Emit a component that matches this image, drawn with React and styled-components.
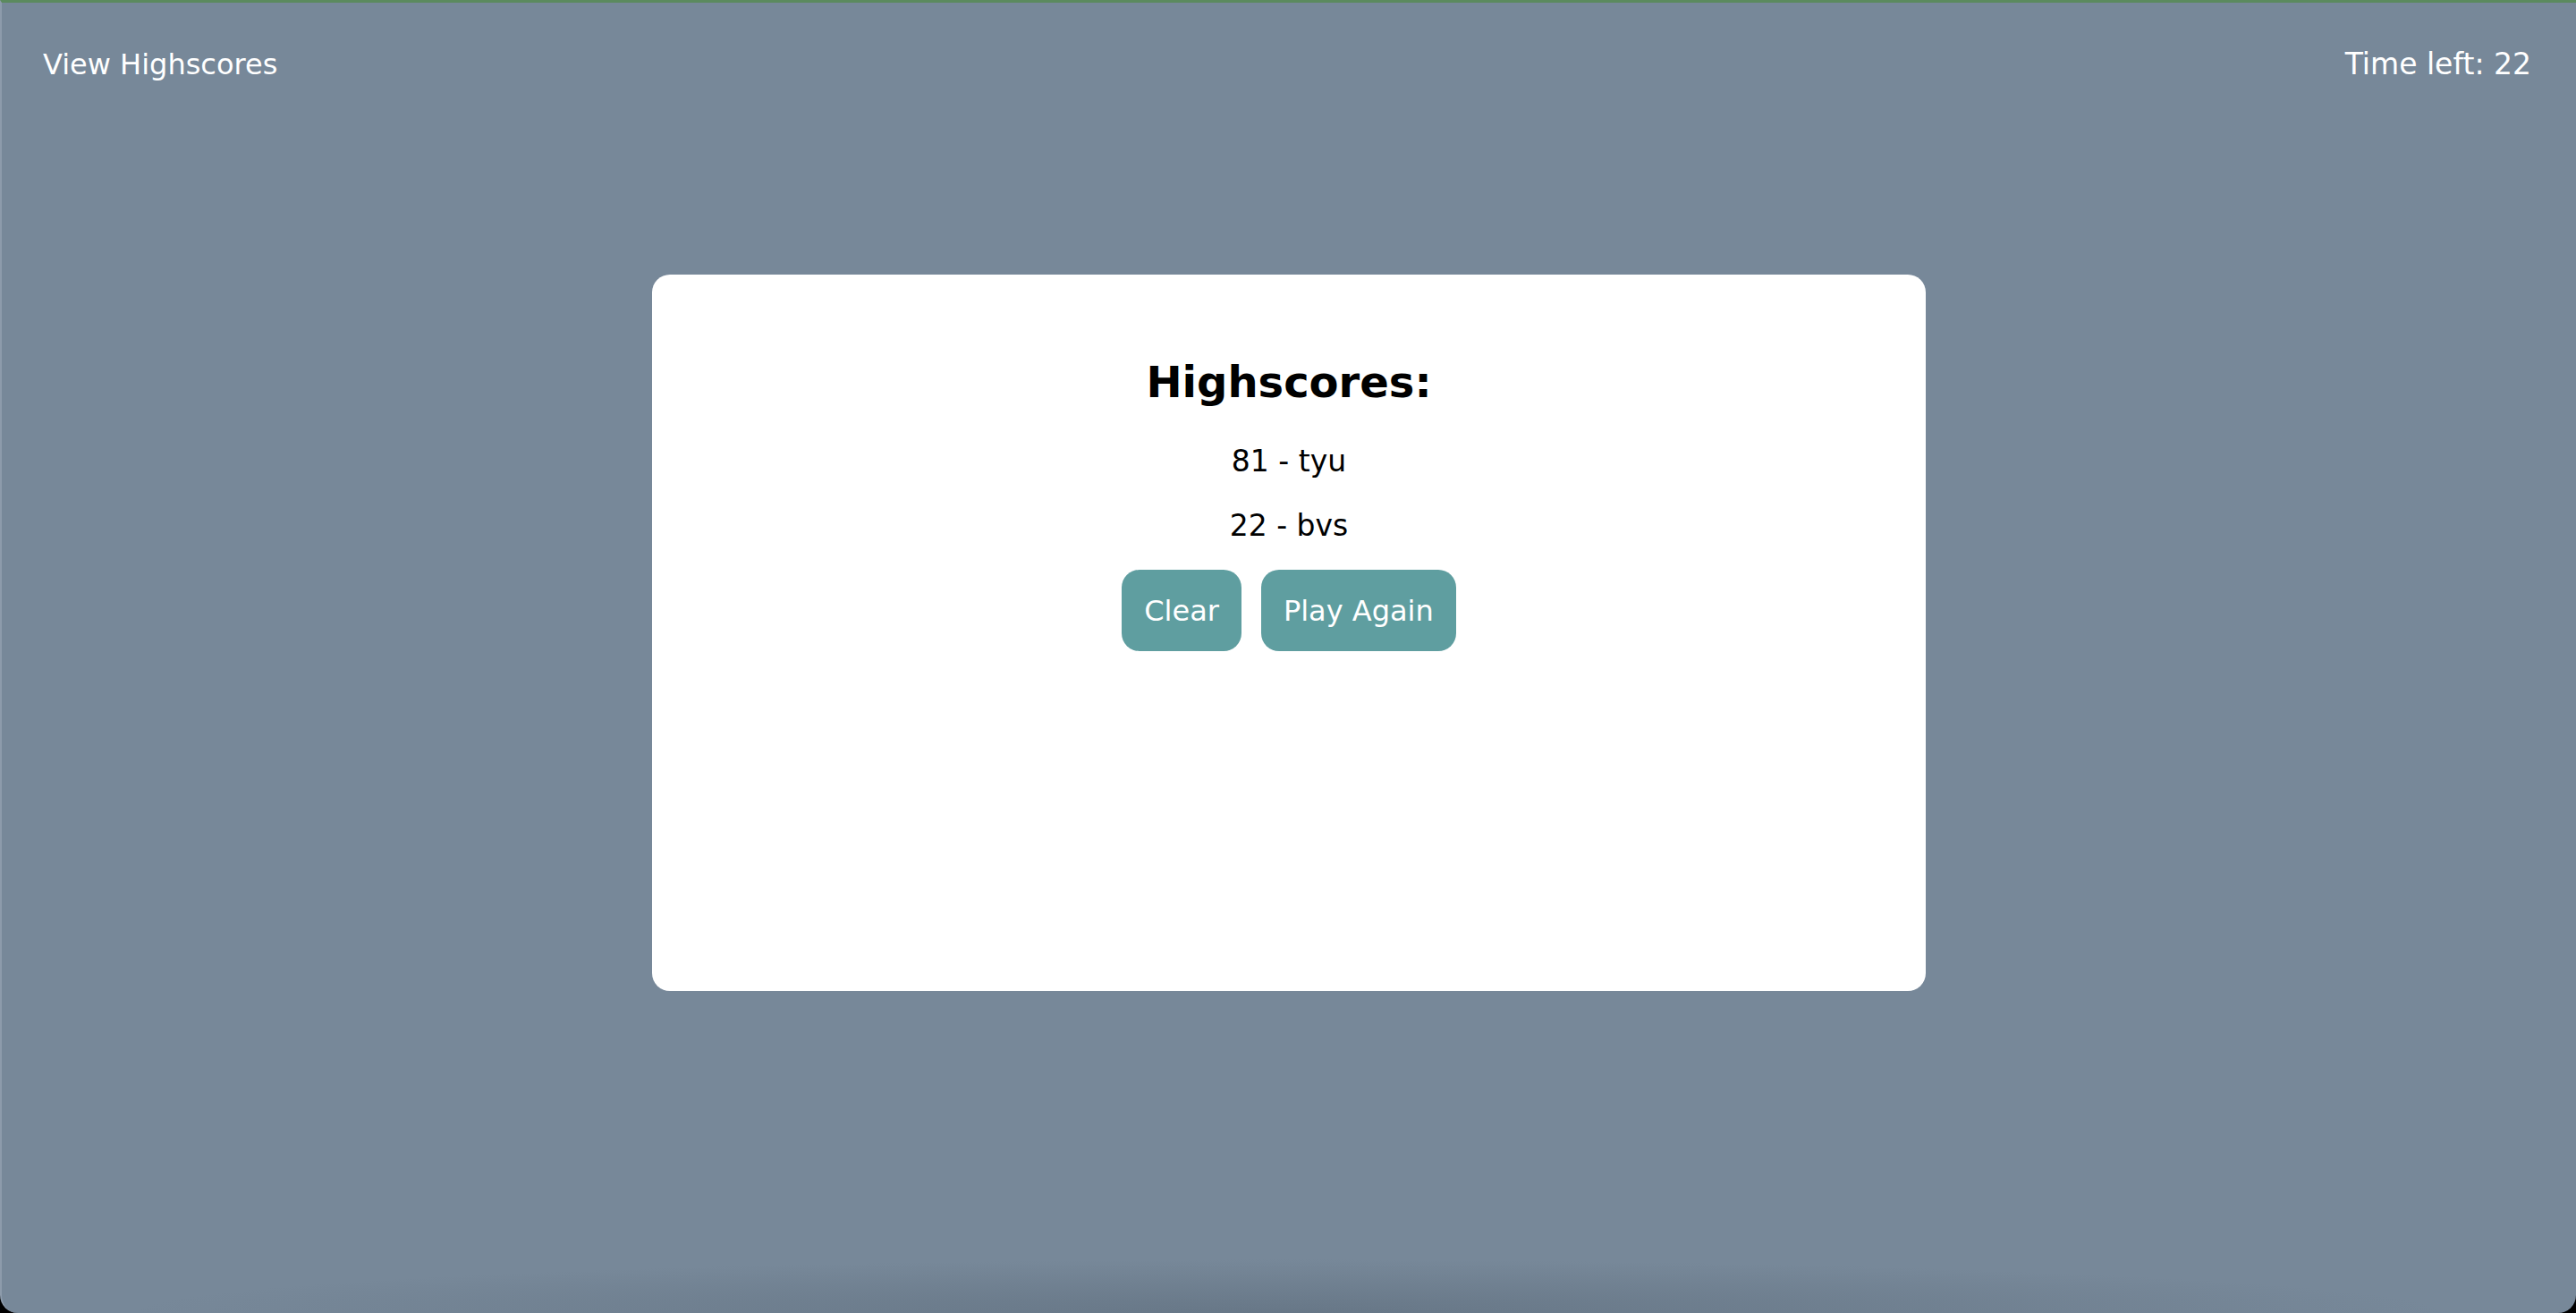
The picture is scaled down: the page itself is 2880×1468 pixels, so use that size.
import React from "react";
import styled, { createGlobalStyle } from "styled-components";

const GlobalStyle = createGlobalStyle`
  html, body {
    margin: 0;
    padding: 0;
    background: #000;
  }
  body {
    font-family: "DejaVu Sans", Verdana, sans-serif;
  }
`;

const scores = [
  { score: 81, name: "tyu" },
  { score: 22, name: "bvs" },
];

function App() {
  return (
    <>
      <GlobalStyle />
      <Page>
        <Header>
          <HeaderLink>View Highscores</HeaderLink>
          <Timer>Time left: 22</Timer>
        </Header>
        <Card>
          <Title>Highscores:</Title>
          {scores.map((s) => (
            <ScoreLine key={s.name}>
              {s.score} - {s.name}
            </ScoreLine>
          ))}
          <ButtonRow>
            <Button>Clear</Button>
            <Button>Play Again</Button>
          </ButtonRow>
        </Card>
      </Page>
    </>
  );
}

const Page = styled.div`
  box-sizing: border-box;
  height: 1468px;
  width: 100%;
  background: radial-gradient(
      ellipse 45% 60px at 50% 100%,
      rgba(90, 105, 120, 0.55),
      rgba(90, 105, 120, 0) 100%
    ),
    #778899;
  border-top: 3px solid #5b8a5e;
  border-left: 2px solid #8d9bab;
  border-radius: 0 0 20px 20px;
  display: flex;
  flex-direction: column;
  align-items: center;
`;

const Header = styled.div`
  box-sizing: border-box;
  width: 100%;
  display: flex;
  justify-content: space-between;
  align-items: center;
  padding: 49px 50px 0 46px;
  color: #fff;
  font-size: 32px;
`;

const HeaderLink = styled.span`
  cursor: pointer;
`;

const Timer = styled.span`
  font-size: 33px;
`;

const Card = styled.div`
  box-sizing: border-box;
  margin-top: 216px;
  width: 1424px;
  height: 801px;
  background: #fff;
  border-radius: 20px;
  display: flex;
  flex-direction: column;
  align-items: center;
`;

const Title = styled.h2`
  margin: 92px 0 0;
  font-size: 48px;
  font-weight: bold;
  color: #000;
`;

const ScoreLine = styled.p`
  margin: 41px 0 0;
  font-size: 33px;
  color: #000;
  & + & {
    margin-top: 33px;
  }
`;

const ButtonRow = styled.div`
  display: flex;
  gap: 22px;
  margin-top: 30px;
`;

const Button = styled.button`
  font-family: "DejaVu Sans", Verdana, sans-serif;
  font-size: 32px;
  color: #fff;
  background: #5f9ea0;
  border: none;
  border-radius: 20px;
  height: 91px;
  padding: 0 25px;
  cursor: pointer;
`;

export default App;
